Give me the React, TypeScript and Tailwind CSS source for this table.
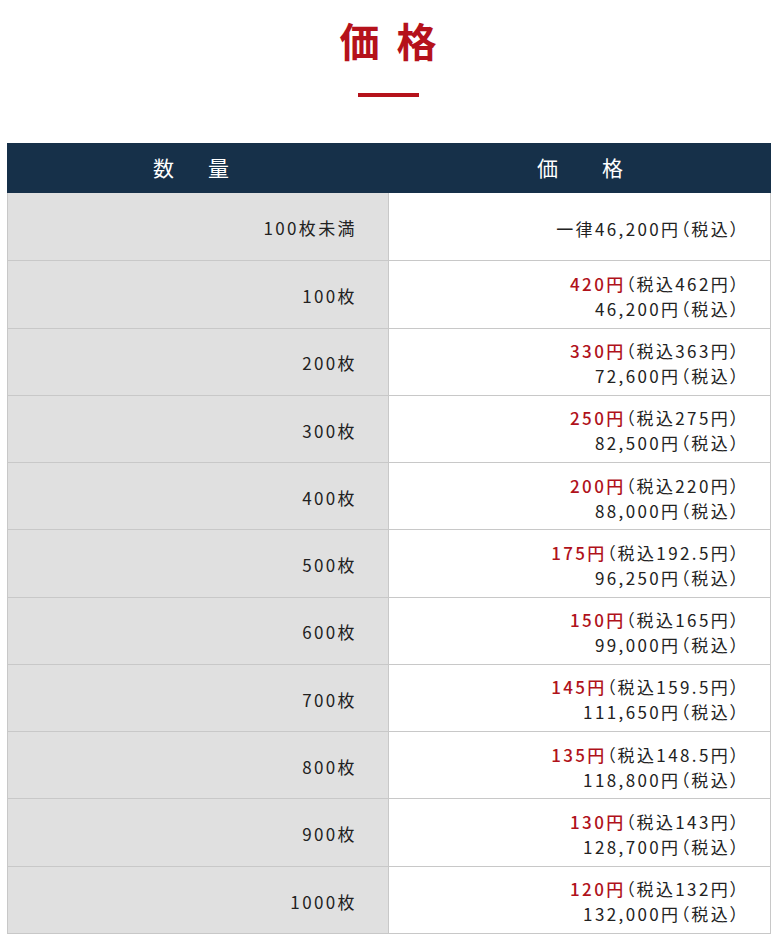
import React from 'react';

const rows = [
  { qty: '100枚未満', single: '一律46,200円（税込）' },
  { qty: '100枚', unit: '420円', tax: '（税込462円）', total: '46,200円（税込）' },
  { qty: '200枚', unit: '330円', tax: '（税込363円）', total: '72,600円（税込）' },
  { qty: '300枚', unit: '250円', tax: '（税込275円）', total: '82,500円（税込）' },
  { qty: '400枚', unit: '200円', tax: '（税込220円）', total: '88,000円（税込）' },
  { qty: '500枚', unit: '175円', tax: '（税込192.5円）', total: '96,250円（税込）' },
  { qty: '600枚', unit: '150円', tax: '（税込165円）', total: '99,000円（税込）' },
  { qty: '700枚', unit: '145円', tax: '（税込159.5円）', total: '111,650円（税込）' },
  { qty: '800枚', unit: '135円', tax: '（税込148.5円）', total: '118,800円（税込）' },
  { qty: '900枚', unit: '130円', tax: '（税込143円）', total: '128,700円（税込）' },
  { qty: '1000枚', unit: '120円', tax: '（税込132円）', total: '132,000円（税込）' },
];

const App: React.FC = () => {
  return (
    <div className="w-full bg-white font-['Noto_Sans_CJK_JP','Noto_Sans',sans-serif] text-[#222] [font-feature-settings:'palt']">
      <div className="flex flex-col items-center pt-[14px]">
        <h2 className="text-[40px] font-bold leading-[52px] text-[#b5121b] tracking-[0.1em] pl-[0.1em]">価 格</h2>
        <div className="mt-[27px] h-[4px] w-[61px] bg-[#b5121b]" />
      </div>

      <div className="ml-[7px] mr-[5px] mt-[46px] mb-[10px] border-b border-[#c8c8c8]">
        <div className="grid grid-cols-2 h-[50px] bg-[#163049] text-white text-[21px]">
          <div className="flex items-center justify-center gap-[34px] pr-[14px]">
            <span>数</span>
            <span>量</span>
          </div>
          <div className="flex items-center justify-center gap-[44px]">
            <span>価</span>
            <span>格</span>
          </div>
        </div>
        {rows.map((r, i) => (
          <div
            key={r.qty}
            className={`grid grid-cols-2 h-[67.27px] text-[17px] tracking-[0.14em] ${i > 0 ? 'border-t border-[#c8c8c8]' : ''}`}
          >
            <div className="flex items-center justify-end pt-[3px] pr-[31px] bg-[#e0e0e0] border-l border-r border-[#c8c8c8]">
              {r.qty}
            </div>
            <div className="flex flex-col items-end justify-center pt-[3px] pr-[29px] bg-white border-r border-[#c8c8c8] leading-[25px]">
              {r.single ? (
                <div>{r.single}</div>
              ) : (
                <>
                  <div>
                    <span className="font-medium text-[#b0121b]">{r.unit}</span>
                    {r.tax}
                  </div>
                  <div>{r.total}</div>
                </>
              )}
            </div>
          </div>
        ))}
      </div>
    </div>
  );
};

export default App;
